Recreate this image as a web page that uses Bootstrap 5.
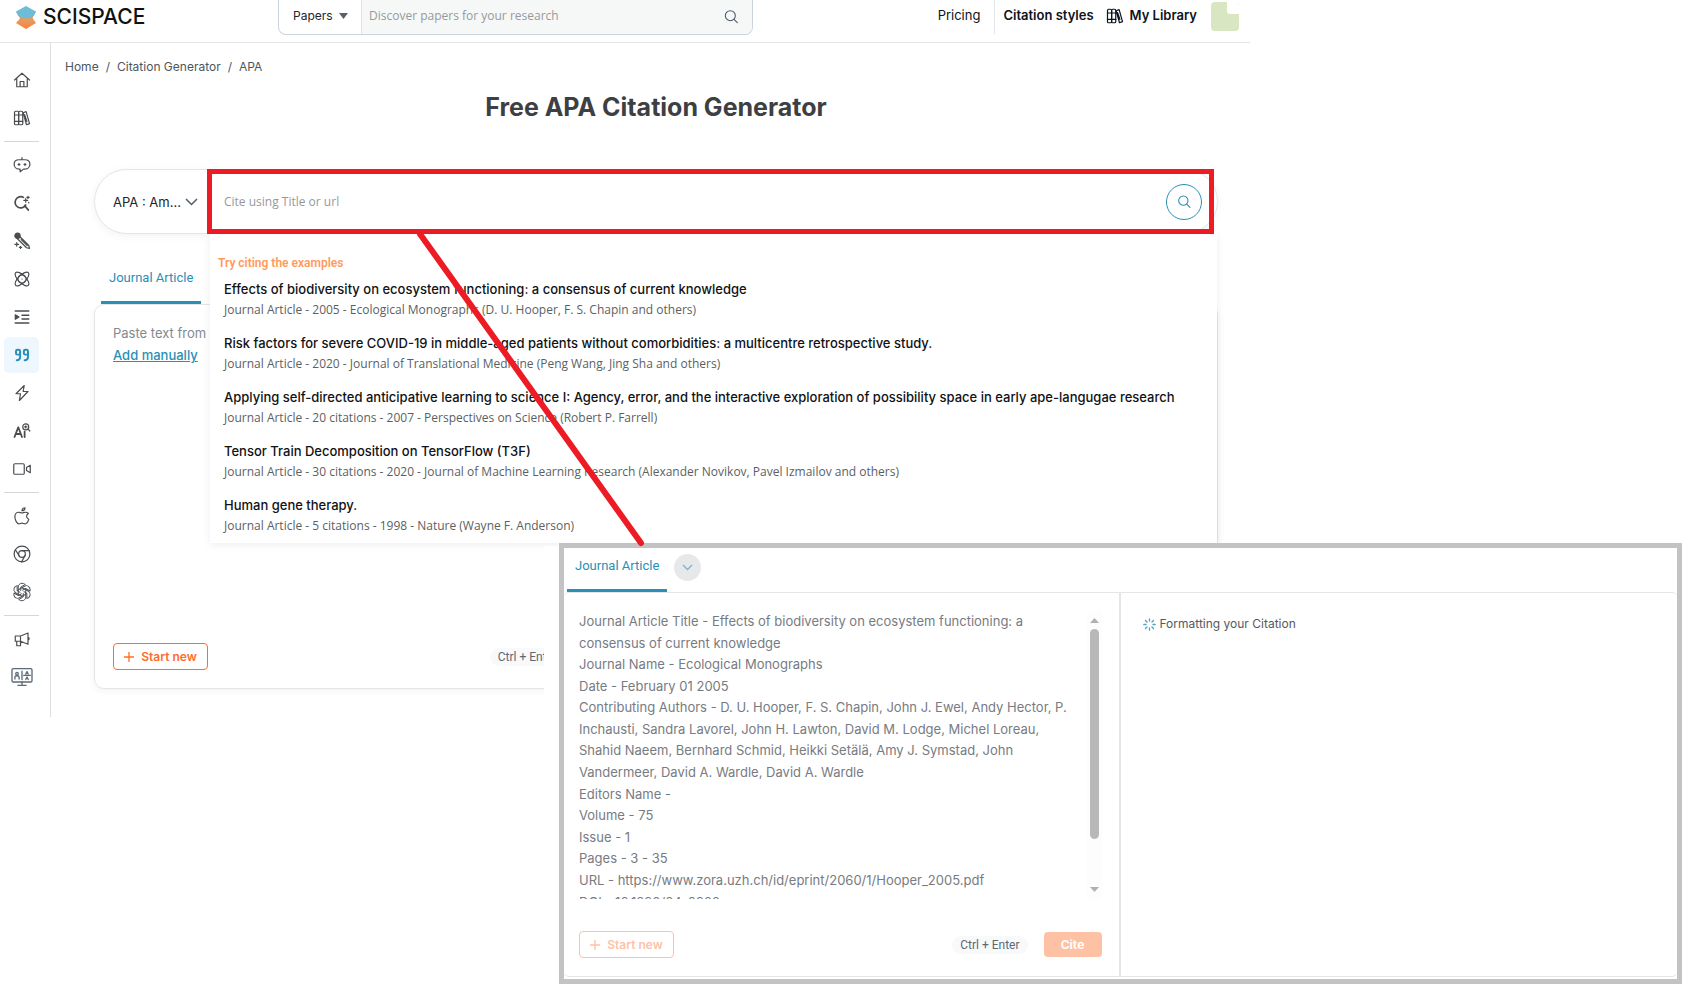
<!DOCTYPE html>
<html lang="en">
<head>
<meta charset="utf-8">
<meta name="viewport" content="width=device-width, initial-scale=1">
<title>Free APA Citation Generator</title>
<link href="https://cdn.jsdelivr.net/npm/bootstrap@5.3.0/dist/css/bootstrap.min.css" rel="stylesheet">
<style>
  :root { --teal: #2a8fb5; --line: #e3e5e7; --orange: #ff6d28; --red: #ed1c24; }
  body { font: 400 13px/20px Inter, "Liberation Sans", sans-serif; color: #212529; background: #fff; }
  a { color: inherit; text-decoration: none; }
  svg { display: block; flex: none; }
  .ico { width: 18px; height: 18px; fill: none; stroke: currentColor; stroke-width: 1.6; stroke-linecap: round; stroke-linejoin: round; }
  .ico-sm { width: 16px; height: 16px; }

  .app-shell { max-width: 1250px; }

  .topbar { height: 43px; border-bottom: 1px solid var(--line); }
  .brand { width: 278px; padding-left: 14px; gap: 5px; font-size: 21px; font-weight: 500; line-height: 34px; color: #111; }
  .brand svg { width: 24px; height: 25px; }
  .top-search { width: 475px; height: 35px; border: 1px solid #ccd3da; border-top: 0; border-radius: 0 0 8px 8px; overflow: hidden; }
  .kind-pick { position: relative; width: 83px; border-right: 1px solid #dfe3e6; }
  .kind-pick select, .style-pick select { appearance: none; border: 0; background: transparent; outline: 0; color: #212529; }
  .kind-pick select { width: 100%; height: 31px; padding: 0 14px; font-size: 12px; }
  .kind-pick svg { position: absolute; right: 13px; top: 13px; pointer-events: none; }
  .top-search .field { background: #f6f8f8; }
  .top-search input { width: 100%; height: 31px; border: 0; padding: 0 7px; background: transparent; font: 12px "Open Sans", sans-serif; }
  ::placeholder { color: #96999c !important; opacity: 1; }
  .icon-btn { border: 0; padding: 0; background: transparent; }
  .top-search .icon-btn { height: 33px; margin-right: 13px; color: #4c5a67; }
  .top-links { height: 34px; font-size: 13px; line-height: 31px; color: #0c1220; }
  .top-links .pricing { padding-right: 14px; }
  .top-links .split { border-left: 1px solid var(--line); padding: 0 8px; height: 34px; }
  .top-links .library { padding: 0 14px 0 4px; gap: 6px; }
  .medium { font-weight: 600; }
  .avatar-tile { width: 28px; height: 29px; border-radius: 4px; background: #d8e6c2; overflow: hidden; margin: 2px 11px 0 0; }
  .avatar-tile::after { content: ""; display: block; margin-left: auto; width: 12px; height: 12px; background: #fff; border-bottom-left-radius: 3px; }

  .side { width: 51px; min-height: 674px; padding: 19px 11px 0 4px; border-right: 1px solid #dcdfe1; color: #4a4d50; }
  .side a { display: flex; align-items: center; justify-content: center; height: 36px; margin-bottom: 2px; border-radius: 5px; }
  .side a.current { background: #eef7fe; color: var(--teal); }
  .side hr { margin: 5px 0; border-color: #b9bdc0; opacity: .6; }
  .side .fine { stroke-width: 1.2; width: 20px; height: 20px; }
  .side .screen { width: 22px; height: 20px; color: #5c6b78; }

  .work { padding: 14px 32px 0 14px; }
  .crumbs { font-size: 12px; color: #4d5660; gap: 7px; }
  .page-body { margin-left: 29px; }
  h1 { margin: 14px 0 46px; font-size: 25px; line-height: 32px; font-weight: 700; color: #3d3f42; }

  .cite-bar { position: relative; z-index: 3; height: 65px; border: 1px solid var(--line); border-radius: 33px; box-shadow: 0 2px 10px rgba(0,0,0,.05); background: #fff; }
  .style-pick { position: relative; width: 112px; }
  .style-pick select { width: 100%; height: 63px; padding: 0 20px 0 18px; font-size: 13px; }
  .style-pick svg { position: absolute; right: 9px; top: 28px; color: #505d69; pointer-events: none; }
  .cite-box { position: relative; padding: 0 15px 0 17px; }
  .cite-box input { height: 63px; border: 0; outline: 0; padding: 0; font: 12px "Open Sans", sans-serif; }
  .cite-box::after { content: ""; position: absolute; inset: -1px 3px -1px 0; border: 5px solid var(--red); pointer-events: none; }
  .round-go { width: 36px; height: 36px; border: 1px solid var(--teal); border-radius: 50%; color: var(--teal); background: #fff; padding: 0; }

  .suggest { position: absolute; z-index: 2; top: 64px; left: 115px; right: 0; height: 309px; padding: 19px 0 0 8px; background: #fff; box-shadow: 0 2px 8px rgba(0,0,0,.07); }
  .suggest h2 { margin: 0; font: 600 12px/20px Roboto, sans-serif; color: #ff9a5c; }
  .suggest a { display: block; padding: 6px; height: 54px; }
  .suggest strong { display: block; font-weight: 500; font-size: 13px; line-height: 21px; color: #101214; white-space: nowrap; }
  .suggest small { display: block; font: 12px/20px "Open Sans", sans-serif; color: #5b5f63; white-space: nowrap; }

  .tab-link { display: block; padding: 8px 8px 13px; border: 0; border-bottom: 3px solid var(--teal); background: transparent; font: 400 13px/20px Roboto, sans-serif; color: var(--teal); }
  .tab-row { padding: 26px 7px 0; }
  .sheet { height: 385px; border: 1px solid var(--line); border-radius: 10px; box-shadow: 0 2px 8px rgba(0,0,0,.05); }
  .pane { padding: 17px 17px 18px 18px; }
  .pane-note { font-size: 13px; line-height: 22px; color: #85898d; }
  .pane-note a { color: var(--teal); text-decoration: underline; font-weight: 500; }
  .start-new { width: 95px; height: 27px; padding: 0; border: 1px solid var(--orange); border-radius: 4px; background: #fff; color: var(--orange); font: 600 12px/20px Inter, sans-serif; gap: 7px; }
  .key-hint { padding: 0 8px; border-radius: 9px; background: #f7f9fb; font: 12px/18px Roboto, sans-serif; color: #5d6872; }
  .cite-go { width: 58px; height: 25px; padding: 0; border: 0; border-radius: 4px; background: var(--orange); color: #fff; font: 700 12px/20px Inter, sans-serif; }
  .faded { opacity: .42; }

  /* result panel floating over the page */
  .result { position: absolute; z-index: 5; left: 559px; right: 8px; top: 543px; border: 5px solid #c3c3c3; background: #fff; box-shadow: -15px 3px 0 #fff; }
  .result .tab-row { padding: 0 3px; gap: 7px; }
  .more-tabs { width: 27px; height: 27px; border: 0; border-radius: 50%; background: #e6e8ea; color: #7db2c8; padding: 0; margin-top: 6px; }
  .result-sheet { height: 385px; margin-bottom: 2px; border-top: 1px solid var(--line); border-bottom: 1px solid var(--line); border-radius: 5px; }
  .result .pane { padding: 18px 17px 18px 15px; border-right: 2px solid var(--line); }
  .source-wrap { height: 288px; }
  .source { padding: 0 8px 0 0; border: 0; outline: 0; resize: none; overflow-y: hidden; font: 13px/1.66 Inter, sans-serif; color: #777b82; }
  .scroll-rail { width: 15px; padding: 7px 3px; background: #fdfdfd; color: #b0b0b0; }
  .scroll-grip { height: 210px; margin: 6px 0 auto; border-radius: 5px; background: #b8b8b8; }
  .status-line { padding: 21px 22px; gap: 4px; font-size: 12px; color: #55595d; }
  .pointer-line { position: absolute; z-index: 6; left: 415px; top: 233px; width: 232px; height: 316px; pointer-events: none; }
</style>
</head>
<body class="position-relative min-vh-100">
<div class="app-shell">
  <header class="topbar d-flex align-items-start">
    <a href="#" class="brand d-flex align-items-center">
      <svg viewBox="0 0 24 25">
        <defs><linearGradient id="lg" x1="0" y1="0" x2="0" y2="1"><stop offset="0" stop-color="#8fb0ab"/><stop offset=".5" stop-color="#e69a62"/><stop offset="1" stop-color="#ff7f2e"/></linearGradient></defs>
        <path d="M2 6.500 12 12l10-5.500L18.500 13l3.500 5-10 6L2 18l4-4.500z" fill="url(#lg)"/>
        <path d="M12 1 22 6.500l-2 4L12 13.500 4 10.500l-2-4z" fill="#6dbdd8"/>
      </svg>
      <span>SCISPACE</span>
    </a>
    <form class="top-search d-flex">
      <label class="kind-pick"><select aria-label="Search in"><option>Papers</option></select>
        <svg width="9" height="6" viewBox="0 0 9 6"><path d="M0 0h9L4.500 6z" fill="#54616c"/></svg></label>
      <div class="field d-flex flex-fill align-items-start">
        <input type="search" aria-label="Discover papers" placeholder="Discover papers for your research">
        <button type="button" class="icon-btn" aria-label="Search"><svg class="ico ico-sm" viewBox="0 0 24 24"><circle cx="11" cy="10" r="7.500"/><path d="m16.500 15.500 5 5"/></svg></button>
      </div>
    </form>
    <nav class="top-links d-flex align-items-start ms-auto">
      <a href="#" class="pricing">Pricing</a>
      <a href="#" class="split medium">Citation styles</a>
      <a href="#" class="library medium d-flex align-items-center"><svg class="ico" viewBox="0 0 24 24"><use href="#books"/></svg>My Library</a>
      <div class="avatar-tile"></div>
    </nav>
  </header>

  <div class="d-flex">
    <aside class="side">
      <a href="#" aria-label="Home"><svg class="ico" viewBox="0 0 24 24"><path d="M2 12 12 3l10 9M5 10v11h14V10M9.500 21v-7h5v7"/></svg></a>
      <a href="#" aria-label="Library"><svg class="ico" viewBox="0 0 24 24"><g id="books"><rect x="2" y="3" width="5.500" height="18" rx="1.500"/><rect x="7.500" y="3" width="5.500" height="18" rx="1.500"/><path d="M2 8h11M2 16.500h11M13.500 5l4-1.500 4.500 16-4 1.500zM15.500 7.500l3 9"/></g></svg></a>
      <hr>
      <a href="#" aria-label="Chat"><svg class="ico" viewBox="0 0 24 24"><path d="M12 5V2M8 5h8c4 0 6.500 2.500 6.500 6S20 17.500 16 17.500h-2L9.500 21v-3.500H8c-4 0-6.500-3-6.500-6.500S4 5 8 5zM8 10v2.500M6.800 11.200h2.400M16 10v2.500M14.800 11.200h2.400"/></svg></a>
      <a href="#" aria-label="Find topics"><svg class="ico" viewBox="0 0 24 24"><path d="M14 4.500A7.500 7.500 0 1 0 17 14.500M15.500 15.500l5 6" stroke-width="2.200"/><path d="M17 6v5M14.500 8.500h5M20 3v3M18.500 4.500h3M21 11v1"/></svg></a>
      <a href="#" aria-label="AI writer"><svg class="ico" viewBox="0 0 24 24"><path d="m8 5 13 13 1 4-4-1L5 8z"/><circle cx="6" cy="5" r="3.500" fill="currentColor"/><path d="m11 10 8 8M5 14v5M2.500 16.500h5M10 19v3M8.500 20.500h3"/></svg></a>
      <a href="#" aria-label="Research agent"><svg class="ico" viewBox="0 0 24 24"><ellipse cx="12" cy="12" rx="12" ry="5" transform="rotate(45 12 12)"/><ellipse cx="12" cy="12" rx="12" ry="5" transform="rotate(-45 12 12)"/><circle cx="12" cy="12" r="5.500"/><path d="M12 12h.1"/></svg></a>
      <a href="#" aria-label="Paraphraser"><svg class="ico" viewBox="0 0 24 24"><path d="M3 4h18M12 9.500h9M12 14.500h9M3 20h18" stroke-width="2"/><path d="m3 9 5 3-5 3z" fill="currentColor"/></svg></a>
      <a href="#" class="current" aria-label="Citation generator"><svg class="ico" viewBox="0 0 24 24"><g stroke-width="2.600"><rect x="4" y="5" width="5.500" height="6.500" rx="2"/><path d="M9.500 9v5c0 3-2 5-4.500 5"/><rect x="14.500" y="5" width="5.500" height="6.500" rx="2"/><path d="M20 9v5c0 3-2 5-4.500 5"/></g></svg></a>
      <a href="#" aria-label="Quick actions"><svg class="ico" viewBox="0 0 24 24"><path d="M15 2 4 13h6l-1.500 9L20 10h-6.500z"/></svg></a>
      <a href="#" aria-label="AI detector"><svg class="ico" viewBox="0 0 24 24"><path d="m2 20 5-13 5 13M4 16h6" stroke-width="2.400"/><path d="M15.500 13v7" stroke-width="2.400"/><circle cx="17" cy="6.500" r="4"/><path d="m20 9.500 2.500 2.500M17 5v3M15.500 6.500h3"/></svg></a>
      <a href="#" aria-label="Video"><svg class="ico" viewBox="0 0 24 24"><rect x="1" y="5" width="14" height="14" rx="1.500"/><path d="m18 10 5-3v10l-5-3z"/></svg></a>
      <hr>
      <a href="#" aria-label="iOS app"><svg class="ico" viewBox="0 0 24 24"><path d="M12 8c-1.500 0-2.500-1-4.500-1C4.500 7 2.500 9.500 2.500 13c0 4.500 3 9.500 5.500 9.500 1.500 0 2.500-1 4-1s2.500 1 4 1c2 0 4-3 5-6-4-2-3.500-6.500-.5-8C19.500 7.500 18 7 16.500 7 14.500 7 13.500 8 12 8zM12 5c0-2 1.500-4 4-4 0 2.500-1.500 4-4 4z"/></svg></a>
      <a href="#" aria-label="Chrome extension"><svg class="ico" viewBox="0 0 24 24"><circle cx="12" cy="12" r="10.500"/><circle cx="12" cy="12" r="4.500"/><path d="M12 7.500h9.500M8 14 3.200 6.500M16 14l-4.500 8.500"/></svg></a>
      <a href="#" aria-label="GPT"><svg class="ico fine" viewBox="0 0 24 24"><g id="petal"><path d="M7.500 14.500V6.200C7.500 3.500 9.500 1.500 12 1.500c1.500 0 2.800.6 3.700 1.600M15.700 3.100 10.500 6.200v4"/></g><use href="#petal" transform="rotate(60 12 12)"/><use href="#petal" transform="rotate(120 12 12)"/><use href="#petal" transform="rotate(180 12 12)"/><use href="#petal" transform="rotate(240 12 12)"/><use href="#petal" transform="rotate(300 12 12)"/></svg></a>
      <hr>
      <a href="#" aria-label="Announcements"><svg class="ico" viewBox="0 0 24 24"><path d="M3 8h7l10-4v15l-10-4H3zM10 8v7M5 15v6h5v-6M20 9.500c2 .5 2 3.500 0 4"/></svg></a>
      <a href="#" aria-label="Demo"><svg class="ico screen" viewBox="0 0 26 24"><rect x="1" y="2" width="24" height="16" rx="1.500"/><path d="M13 5v10M15 10h8M13 18v4M8 22h10M4.500 14.500V12c0-2 5-2 5 0v2.500"/><circle cx="7" cy="8" r="1.500"/><path d="M17.500 8.500 19 5.500l1.500 3M17.500 15l1.500-3 1.500 3"/></svg></a>
    </aside>

    <main class="work flex-fill">
      <nav class="crumbs d-flex" aria-label="Breadcrumb"><a href="#">Home</a><span>/</span><a href="#">Citation Generator</a><span>/</span><span>APA</span></nav>
      <div class="page-body">
        <h1 class="text-center">Free APA Citation Generator</h1>

        <form class="cite-bar d-flex">
          <label class="style-pick"><select aria-label="Citation style"><option>APA : Am...</option></select>
            <svg width="13" height="8" viewBox="0 0 13 8" fill="none" stroke="currentColor" stroke-width="1.500"><path d="m1 1 5.500 5.500L12 1"/></svg></label>
          <div class="cite-box d-flex align-items-center flex-fill">
            <input class="flex-fill" type="text" aria-label="Cite using Title or url" placeholder="Cite using Title or url">
            <button type="button" class="round-go d-flex align-items-center justify-content-center" aria-label="Cite"><svg class="ico ico-sm" viewBox="0 0 24 24"><circle cx="11" cy="10" r="7"/><path d="m16.500 15.500 4.500 4.500"/></svg></button>
          </div>
          <div class="suggest">
            <h2>Try citing the examples</h2>
            <a href="#"><strong>Effects of biodiversity on ecosystem functioning: a consensus of current knowledge</strong><small>Journal Article - 2005 - Ecological Monographs (D. U. Hooper, F. S. Chapin and others)</small></a>
            <a href="#"><strong>Risk factors for severe COVID-19 in middle-aged patients without comorbidities: a multicentre retrospective study.</strong><small>Journal Article - 2020 - Journal of Translational Medicine (Peng Wang, Jing Sha and others)</small></a>
            <a href="#"><strong>Applying self-directed anticipative learning to science I: Agency, error, and the interactive exploration of possibility space in early ape-langugae research</strong><small>Journal Article - 20 citations - 2007 - Perspectives on Science (Robert P. Farrell)</small></a>
            <a href="#"><strong>Tensor Train Decomposition on TensorFlow (T3F)</strong><small>Journal Article - 30 citations - 2020 - Journal of Machine Learning Research (Alexander Novikov, Pavel Izmailov and others)</small></a>
            <a href="#"><strong>Human gene therapy.</strong><small>Journal Article - 5 citations - 1998 - Nature (Wayne F. Anderson)</small></a>
          </div>
        </form>

        <div class="tab-row d-flex"><button type="button" class="tab-link">Journal Article</button></div>
        <section class="sheet row g-0">
          <div class="pane col-6 d-flex flex-column h-100">
            <div class="pane-note">Paste text from<br><a href="#">Add manually</a></div>
            <div class="d-flex align-items-center mt-auto">
              <button type="button" class="start-new d-flex align-items-center justify-content-center"><svg width="10" height="10" viewBox="0 0 10 10" stroke="currentColor" stroke-width="1.300"><path d="M5 0v10M0 5h10"/></svg>Start new</button>
              <span class="key-hint ms-auto me-3">Ctrl + Enter</span>
              <button type="button" class="cite-go">Cite</button>
            </div>
          </div>
        </section>
      </div>
    </main>
  </div>
</div>

<section class="result">
  <div class="tab-row d-flex align-items-start">
    <button type="button" class="tab-link">Journal Article</button>
    <button type="button" class="more-tabs d-flex align-items-center justify-content-center" aria-label="More source types"><svg width="11" height="7" viewBox="0 0 11 7" fill="none" stroke="currentColor" stroke-width="1.300"><path d="m1 1 4.500 4.500L10 1"/></svg></button>
  </div>
  <div class="result-sheet row g-0">
    <div class="pane col-6 d-flex flex-column h-100">
      <div class="source-wrap d-flex">
        <textarea class="source flex-fill" aria-label="Source details" spellcheck="false">Journal Article Title - Effects of biodiversity on ecosystem functioning: a consensus of current knowledge
Journal Name - Ecological Monographs
Date - February 01 2005
Contributing Authors - D. U. Hooper, F. S. Chapin, John J. Ewel, Andy Hector, P. Inchausti, Sandra Lavorel, John H. Lawton, David M. Lodge, Michel Loreau, Shahid Naeem, Bernhard Schmid, Heikki Setälä, Amy J. Symstad, John Vandermeer, David A. Wardle, David A. Wardle
Editors Name -
Volume - 75
Issue - 1
Pages - 3 - 35
URL - https://www.zora.uzh.ch/id/eprint/2060/1/Hooper_2005.pdf
DOI - 10.1890/04-0922</textarea>
        <div class="scroll-rail d-flex flex-column" aria-hidden="true">
          <svg width="9" height="5" viewBox="0 0 9 5"><path d="M0 5 4.500 0 9 5z" fill="currentColor"/></svg>
          <div class="scroll-grip"></div>
          <svg width="9" height="5" viewBox="0 0 9 5"><path d="M0 0 4.500 5 9 0z" fill="currentColor"/></svg>
        </div>
      </div>
      <div class="d-flex align-items-center mt-auto">
        <button type="button" class="start-new faded d-flex align-items-center justify-content-center"><svg width="10" height="10" viewBox="0 0 10 10" stroke="currentColor" stroke-width="1.300"><path d="M5 0v10M0 5h10"/></svg>Start new</button>
        <span class="key-hint ms-auto me-3">Ctrl + Enter</span>
        <button type="button" class="cite-go faded">Cite</button>
      </div>
    </div>
    <div class="col-6">
      <div class="status-line d-flex align-items-center" role="status">
        <svg width="13" height="13" viewBox="0 0 24 24" stroke="#4fa3c4" stroke-width="2.400" stroke-linecap="round"><path d="M12 1.500v4M12 18.500v4M1.500 12h4M18.500 12h4M4.500 4.500l3 3M16.500 16.500l3 3M4.500 19.500l3-3M16.500 7.500l3-3"/></svg>
        Formatting your Citation
      </div>
    </div>
  </div>
</section>
<svg class="pointer-line" viewBox="0 0 232 316"><path d="M5 1 226 310" stroke="#ed1c24" stroke-width="6" stroke-linecap="round"/></svg>
<script src="https://cdn.jsdelivr.net/npm/bootstrap@5.3.0/dist/js/bootstrap.bundle.min.js"></script>
</body>
</html>
